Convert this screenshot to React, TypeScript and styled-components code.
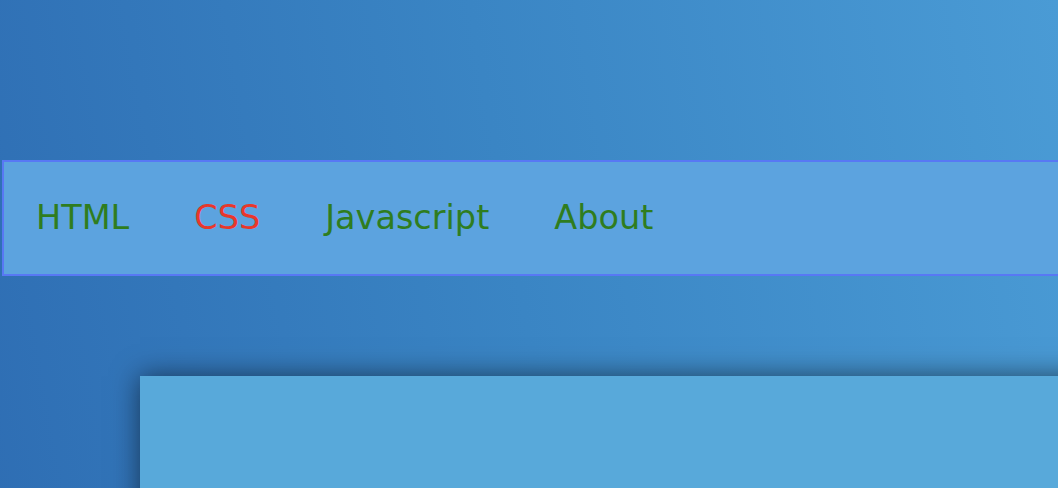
import React from "react";
import styled, { createGlobalStyle } from "styled-components";

const Global = createGlobalStyle`
  html, body {
    margin: 0;
    padding: 0;
    overflow: hidden;
  }
  body {
    min-height: 100vh;
    background: linear-gradient(80deg, #2e6db3 0%, #3a85c4 50%, #4a9bd5 100%);
    font-family: "DejaVu Sans", "Noto Sans", sans-serif;
  }
`;

const Page = styled.div`
  min-height: 100vh;
  padding-top: 160px;
  padding-left: 2px;
  box-sizing: border-box;
  width: 1120px;
`;

const Nav = styled.nav`
  box-sizing: border-box;
  height: 116px;
  border: 2px solid #5878f4;
  background: #5ca3df;
  display: flex;
  align-items: center;
  padding-left: 32px;
  gap: 65px;
`;

const NavLink = styled.a<{ $active?: boolean }>`
  font-size: 33.5px;
  font-weight: 400;
  color: ${(p) => (p.$active ? "#e8372b" : "#2f7d1f")};
  text-decoration: none;
  line-height: 1;
`;

const Card = styled.section`
  margin-top: 100px;
  margin-left: 138px;
  height: 300px;
  background: #58a9da;
  box-shadow: 0 0 26px rgba(0, 0, 0, 0.55);
`;

export default function App() {
  return (
    <>
      <Global />
      <Page>
        <Nav>
          <NavLink href="#">HTML</NavLink>
          <NavLink href="#" $active>
            CSS
          </NavLink>
          <NavLink href="#">Javascript</NavLink>
          <NavLink href="#">About</NavLink>
        </Nav>
        <Card />
      </Page>
    </>
  );
}
